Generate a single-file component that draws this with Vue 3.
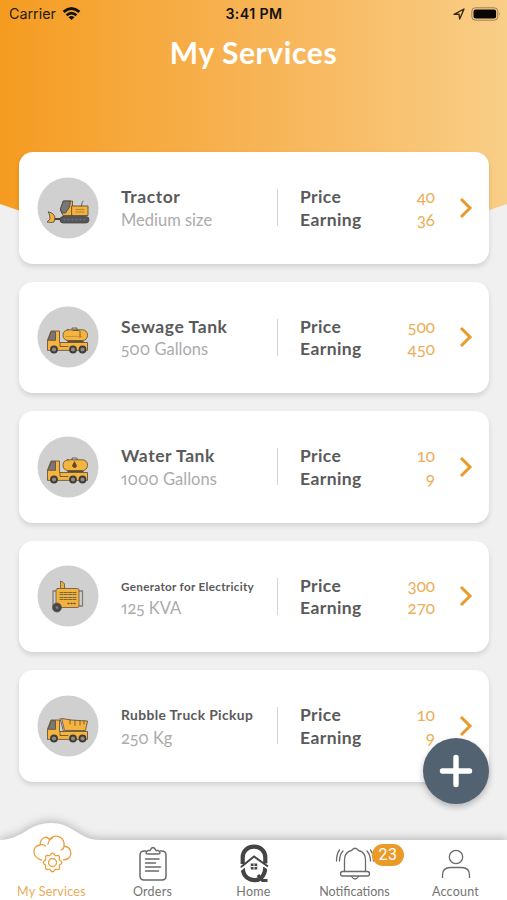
<script setup>
const services = [
  { name: 'Tractor', detail: 'Medium size', price: 40, earning: 36, icon: 'tractor' },
  { name: 'Sewage Tank', detail: '500 Gallons', price: 500, earning: 450, icon: 'tank' },
  { name: 'Water Tank', detail: '1000 Gallons', price: 10, earning: 9, icon: 'water' },
  { name: 'Generator for Electricity', detail: '125 KVA', price: 300, earning: 270, icon: 'generator', size: 'tiny' },
  { name: 'Rubble Truck Pickup', detail: '250 Kg', price: 10, earning: 9, icon: 'dump', size: 'small' },
]

// Scalloped gear outline with eight lobes.
const gear = 'M' + Array.from({ length: 96 }, (_, i) => {
  const t = (i / 96) * Math.PI * 2
  const r = 8.4 + 0.9 * Math.cos(8 * t)
  return `${(20.5 + r * Math.cos(t)).toFixed(2)} ${(30.5 + r * Math.sin(t)).toFixed(2)}`
}).join('L') + 'Z'
</script>

<template>
  <div class="screen">
    <svg class="header-bg" width="507" height="215" viewBox="0 0 507 215">
      <defs>
        <linearGradient id="hdr" x1="0" y1="0" x2="1" y2="0">
          <stop offset="0" stop-color="#f59b20" />
          <stop offset="0.2" stop-color="#f6a636" />
          <stop offset="0.5" stop-color="#f7b354" />
          <stop offset="1" stop-color="#f9ce87" />
        </linearGradient>
      </defs>
      <path d="M0 0H507V204L488 210.500H19L0 204Z" fill="url(#hdr)" />
    </svg>

    <div class="status">
      <div class="carrier">
        <span>Carrier</span>
        <svg width="19" height="14" viewBox="0 0 20 15" fill="none" stroke="#111" stroke-width="2.900">
          <path d="M1.500 5.200Q10 -2 18.500 5.200" />
          <path d="M4.700 8.900Q10 4.300 15.300 8.900" />
          <path d="M10 14L6.800 10.900Q10 8.200 13.200 10.900Z" fill="#111" stroke="none" />
        </svg>
      </div>
      <div class="time">3:41 PM</div>
      <div class="power">
        <svg width="12" height="12" viewBox="0 0 12 12"><path d="M1 6.300L11 1L6.700 11L6 6.300Z" fill="none" stroke="#3a2a10" stroke-width="1.400" stroke-linejoin="round" /></svg>
        <svg width="30" height="14" viewBox="0 0 30 14">
          <rect x="0.800" y="0.800" width="26" height="12.400" rx="3.500" fill="none" stroke="#98805a" />
          <rect x="2.500" y="2.500" width="22.600" height="9" rx="2" fill="#080705" />
          <path d="M28.300 5q1.300 2 0 4z" fill="#98805a" />
        </svg>
      </div>
    </div>
    <h1>My Services</h1>

    <main class="list">
      <article v-for="s in services" :key="s.name" class="card">
        <svg class="avatar" width="62" height="62" viewBox="0 0 62 62" stroke-linejoin="round" stroke-linecap="round">
          <circle cx="31" cy="31" r="30.500" fill="#d0d0d0" />
          <g v-if="s.icon === 'tractor'" stroke="#4b4239" stroke-width="0.800">
            <path d="M17 42h6" stroke-width="2" />
            <path d="M11.500 35q6 1 6.500 6l-1 4q-3 1-7 0l3-3q0-4-1.500-7z" fill="#f2b23d" />
            <path d="M26.500 24h9v14.500H26l-2.500-5z" fill="#f2b23d" />
            <path d="M27 24h6.500l-1 6-4 6h-3.500l-1.500-4z" fill="#77777b" />
            <path d="M35 29h16v9.500H35z" fill="#f2b23d" />
            <path d="M39 32.500h9M39 35h9" stroke="#a07428" stroke-dasharray="2 1" />
            <path d="M44.500 29q0-4 1.500-5" fill="none" />
            <rect x="23" y="39.500" width="29" height="6.500" rx="3.200" fill="#55565b" />
            <path d="M27 42.700h21" stroke="#8588a0" stroke-dasharray="1 3" />
          </g>
          <g v-else-if="s.icon === 'generator'" stroke="#665342" stroke-width="0.800">
            <path d="M23.500 24v-8q3 1 4 3v5z" fill="#e3ad4a" />
            <path d="M20 26h-4v15h4M42 26h3.500v15H42" fill="none" stroke="#817c73" stroke-width="1.300" />
            <rect x="19" y="23.500" width="23" height="19" rx="1.500" fill="#f2b23d" />
            <g stroke="#75643f" stroke-width="1.200">
              <path d="M23 27.500h16M23 29.500h16M23 32.500h16M23 34.500h16" stroke-dasharray="3 1.300" />
            </g>
            <path d="M31 38.500h8" stroke-width="1.500" stroke-dasharray="1 2" />
            <circle cx="20" cy="42.500" r="4.500" fill="#47474a" />
            <circle cx="20" cy="42.500" r="1.500" fill="#77777a" stroke="none" />
          </g>
          <g v-else stroke="#5b4931" stroke-width="0.800">
            <path d="M10.500 44V34l3.500-9h8.500v11.500H50.500v7.500z" fill="#f5b440" />
            <path d="M11.300 34l3-8.300h4.200V34z" fill="#77777d" />
            <path d="M23 37v3.500h8" fill="none" />
            <template v-if="s.icon === 'dump'">
              <path d="M25 23.500l9 1.500 16.500 1-2 9.500H28z" fill="#f5b440" />
              <path d="M23 23.500l3.500 13M33 25v4M38 25.500v5M43 26v4M47 26v3" fill="none" />
            </template>
            <template v-else>
              <path d="M35 24v-2h5v2" fill="none" />
              <rect x="26" y="23.800" width="24.500" height="10.700" rx="5" fill="#f5b440" />
              <path d="M31 35.500h15" stroke-width="1.500" />
              <path v-if="s.icon === 'water'" d="M37.500 26q-4 5 0 5.500q4 0 0-5.500z" fill="#604824" />
              <template v-else>
                <path d="M43 25.500v6M36 24.500h6" fill="none" />
                <path d="M29 30.500h16" stroke="#c18a2e" />
              </template>
            </template>
            <g fill="#928b80" stroke="#3e3c39" stroke-width="1.800">
              <circle cx="17" cy="43.500" r="3" /><circle cx="36" cy="43.500" r="3" /><circle cx="45.500" cy="43.500" r="3" />
            </g>
          </g>
        </svg>
        <div class="info">
          <strong :class="s.size">{{ s.name }}</strong>
          <span>{{ s.detail }}</span>
        </div>
        <div class="amounts">
          <div><b>Price</b><span>{{ s.price }}</span></div>
          <div><b>Earning</b><span>{{ s.earning }}</span></div>
        </div>
        <svg class="chevron" width="14" height="22" viewBox="0 0 14 22"><path d="M2 2L11 11L2 20" fill="none" stroke="#e99a2c" stroke-width="3" /></svg>
      </article>
    </main>

    <button class="fab" aria-label="Add">
      <svg width="34" height="34" viewBox="0 0 34 34"><path d="M17 3.500V30.500M3.500 17H30.500" stroke="#fff" stroke-width="5.400" stroke-linecap="round" /></svg>
    </button>

    <footer>
      <svg class="nav-bg" width="507" height="88" viewBox="0 0 507 88"><path d="M0 28C24 27 28 11 51 11S78 28 100 28H507V88H0Z" fill="#fff" /></svg>
      <nav>
        <a class="active">
          <svg width="40" height="44" viewBox="0 0 40 44" fill="none" stroke="#e9a040" stroke-width="1.300" stroke-linecap="round">
            <path d="M9.500 28C0 25.500 -.5 14 8 13C8.500 5 14.500 3.500 17.500 7.500C23 1 33 5 32 14C41.500 16 41 27 31.500 28M8 13q3-1 5.500 1M16 12q.5-4 4.500-6M32 14q0 3-3 4" />
            <circle cx="20.500" cy="30.500" r="4" />
            <path :d="gear" />
          </svg>
          <span>My Services</span>
        </a>
        <a>
          <svg width="40" height="44" viewBox="0 0 40 44" fill="none" stroke="#6a6a6a" stroke-width="1.500" stroke-linecap="round">
            <path d="M13 11h-1.500q-4.500 0-4.500 4v21q0 4 4 4h18q4 0 4-4V15q0-4-4.500-4h-1.500" />
            <path d="M15 10.500h2q3-6 6 0h2q4 3 0 3.500H15q-4-.5 0-3.500z" />
            <path d="M12.500 19h13.500M12.500 23h10M12.500 27h15M12.500 31h13" />
          </svg>
          <span>Orders</span>
        </a>
        <a>
          <svg width="40" height="44" viewBox="0 0 40 44" fill="none" stroke="#444">
            <path d="M8.700 24V17.500C8.700 3 31.300 3 31.300 17.500V23.500" stroke-width="4.200" />
            <path d="M8.700 27C8.700 41 22 42 27 38Q31.300 34 31.300 27" stroke-width="4.200" />
            <path d="M24 35l4.500 5.500h5" stroke-width="3.200" />
            <path d="M6 30l14-11.500L35 29" stroke="#fff" stroke-width="2.500" />
            <path d="M7 27l13-10.500L34 26.500" stroke-width="2" />
            <rect x="16.800" y="23.500" width="6.400" height="6" fill="#444" stroke="none" />
            <path d="M20 23.500v6M17 26.500h6" stroke="#fff" stroke-width="0.900" />
          </svg>
          <span>Home</span>
        </a>
        <a class="notify">
          <svg width="40" height="44" viewBox="0 0 40 44" fill="none" stroke="#6a6a6a" stroke-width="1.300" stroke-linecap="round">
            <path d="M9.500 31.500V20q0-8 7-9.500 3.500-4.500 7 0 7 1.500 7 9.500v11.500" />
            <rect x="5.500" y="31.500" width="29" height="4.500" rx="2.200" />
            <path d="M16.500 36.500q3.500 5 7 0M8 11q-3.500 4-3.500 10M4.500 10q-3 4-3 11M32 11q3.500 4 3.500 10M35.500 10q3 4 3 11" />
          </svg>
          <i>23</i>
          <span>Notifications</span>
        </a>
        <a>
          <svg width="40" height="44" viewBox="0 0 40 44" fill="none" stroke="#6a6a6a" stroke-width="1.300">
            <circle cx="20" cy="17" r="6.700" />
            <path d="M6.500 38V35q0-7.500 8-7.500h11q8 0 8 7.500v3" />
          </svg>
          <span>Account</span>
        </a>
      </nav>
    </footer>
  </div>
</template>

<style>
body { margin: 0; overflow: hidden; }
</style>
<style scoped>
.screen { position: relative; width: 507px; height: 900px; overflow: hidden; background: #f0f0f0; font-family: Lato, sans-serif; display: flex; flex-direction: column; }
.header-bg { position: absolute; left: 0; top: 0; }
.status { position: relative; display: grid; grid-template-columns: 1fr auto 1fr; height: 27px; padding: 0 6px 0 9px; align-items: center; font-family: Inter, sans-serif; color: #241b0e; }
.carrier { display: flex; align-items: center; gap: 6px; font-size: 14.300px; }
.time { font-weight: 600; font-size: 14.200px; letter-spacing: .4px; color: #111; margin-right: 2px; }
.power { display: flex; justify-content: flex-end; align-items: center; gap: 6px; }
h1 { position: relative; margin: 7px 0 0; text-align: center; height: 36px; line-height: 36px; font-size: 30px; letter-spacing: .6px; font-weight: 700; color: #fff; }
.list { position: relative; display: grid; gap: 18px; padding: 82px 19px 0; }
.card { box-sizing: border-box; width: 469.500px; height: 111.500px; border-radius: 14px; background: #fff; box-shadow: 0 3px 5px rgba(0,0,0,.12); display: flex; align-items: center; padding-left: 18px; }
.avatar { flex: none; }
.info { width: 156px; height: 37px; margin-left: 22px; border-right: 1px solid #d4d4d4; display: flex; flex-direction: column; justify-content: center; white-space: nowrap; }
.info strong, .info span { height: 22.500px; line-height: 24.500px; }
.info strong { font-size: 17.500px; letter-spacing: .55px; color: #5a5a5a; }
.info strong.tiny { font-size: 11.700px; letter-spacing: .3px; }
.info strong.small { font-size: 13.800px; letter-spacing: .4px; }
.info span { font-size: 16.500px; color: #ababab; font-variant-numeric: oldstyle-nums proportional-nums; }
.amounts { width: 135px; margin-left: 22px; }
.amounts div { display: flex; justify-content: space-between; height: 22.500px; line-height: 24.500px; }
.amounts b { color: #5a5a5a; font-size: 17.500px; letter-spacing: .4px; }
.amounts span { color: #ecae58; font-size: 17px; font-variant-numeric: oldstyle-nums; }
.chevron { margin-left: 24px; }
.fab { position: absolute; left: 423px; top: 738px; width: 66px; height: 66px; border: 0; padding: 0; border-radius: 50%; background: #536270; box-shadow: 0 3px 6px rgba(0,0,0,.25); display: grid; place-items: center; }
footer { position: absolute; left: 0; bottom: 0; width: 507px; height: 88px; }
.nav-bg { position: absolute; left: 0; top: 0; overflow: visible; filter: drop-shadow(0 -2px 4px rgba(0,0,0,.22)); }
nav { position: relative; display: grid; grid-template-columns: repeat(5, 101px); padding: 28px 1px 0; }
nav a { position: relative; display: flex; flex-direction: column; align-items: center; color: #757575; }
nav a span { height: 18px; line-height: 18px; font-size: 12.500px; letter-spacing: .25px; margin-top: -1px; }
nav a.notify span { letter-spacing: 0; }
nav a.active { color: #ebab57; }
nav a.active svg { transform: translateY(-8px); }
nav i { position: absolute; left: 68px; top: 4px; width: 32px; height: 22px; border-radius: 11px; text-align: center; font: normal 16px/22px Roboto, sans-serif; letter-spacing: .5px; color: #fff; background: #eb9a28; }
</style>
